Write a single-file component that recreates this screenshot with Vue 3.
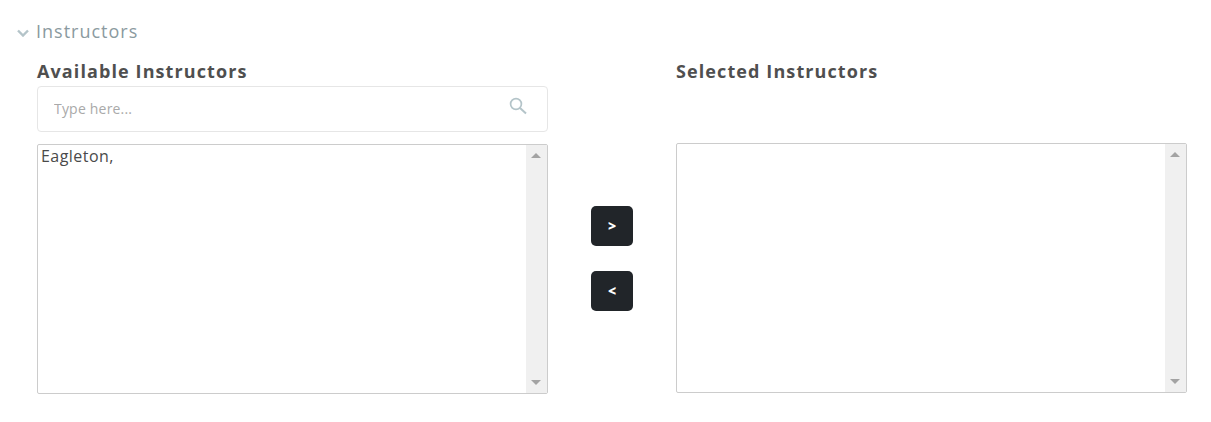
<script setup>
const available = ['Eagleton,']
const selected = []
</script>

<template>
  <div class="page">
    <div class="section-head">
      <svg class="chevron" width="12" height="8" viewBox="0 0 12 8">
        <path d="M1 1.5 L6 6.5 L11 1.5" fill="none" stroke="#b4c4c9" stroke-width="2.4" />
      </svg>
      <span class="section-title">Instructors</span>
    </div>

    <div class="picker">
      <div class="col">
        <h3 class="col-title">Available Instructors</h3>
        <div class="search">
          <input class="search-input" type="text" placeholder="Type here..." />
          <svg class="search-icon" width="18" height="18" viewBox="0 0 18 18">
            <circle cx="7" cy="7" r="5.4" fill="none" stroke="#b4c4c9" stroke-width="1.7" />
            <path d="M11 11 L17 16.6" fill="none" stroke="#b4c4c9" stroke-width="2" />
          </svg>
        </div>
        <div class="listbox">
          <div class="items">
            <div v-for="name in available" :key="name" class="item">{{ name }}</div>
          </div>
          <div class="scrollbar">
            <span class="arrow up"></span>
            <span class="arrow down"></span>
          </div>
        </div>
      </div>

      <div class="actions">
        <button class="move" type="button">&gt;</button>
        <button class="move" type="button">&lt;</button>
      </div>

      <div class="col">
        <h3 class="col-title">Selected Instructors</h3>
        <div class="listbox right">
          <div class="items">
            <div v-for="name in selected" :key="name" class="item">{{ name }}</div>
          </div>
          <div class="scrollbar">
            <span class="arrow up"></span>
            <span class="arrow down"></span>
          </div>
        </div>
      </div>
    </div>
  </div>
</template>

<style>
html, body {
  background: #fff;
}
</style>

<style scoped>
.page {
  height: 422px;
  box-sizing: border-box;
  padding: 19px 24px 0 17px;
  font-family: "Open Sans", "Lato", sans-serif;
  color: #4a4a4a;
}

.section-head {
  display: flex;
  align-items: center;
  height: 24px;
}
.chevron {
  margin: 3px 7px 0 0;
}
.section-title {
  font-size: 18px;
  color: #8b9aa0;
  letter-spacing: 1px;
}

.picker {
  display: grid;
  grid-template-columns: 511px 128px 511px;
  margin-left: 20px;
  margin-top: 14px;
}
.col-title {
  margin: 0;
  height: 29px;
  line-height: 28px;
  font-size: 18px;
  font-weight: 700;
  letter-spacing: 1.1px;
  color: #4f4f4f;
}

.search {
  position: relative;
  height: 46px;
  box-sizing: border-box;
  border: 1px solid #e6e6e6;
  border-radius: 4px;
  display: flex;
  align-items: center;
}
.search-input {
  flex: 1;
  border: none;
  outline: none;
  padding: 0 60px 2px 16px;
  font-family: inherit;
  font-size: 14px;
  letter-spacing: 0.2px;
  color: #4a4a4a;
  background: transparent;
}
.search-input::placeholder {
  color: #a9a9a9;
  opacity: 1;
}
.search-icon {
  position: absolute;
  right: 20px;
  top: 10px;
}

.listbox {
  display: flex;
  height: 250px;
  box-sizing: border-box;
  margin-top: 12px;
  border: 1px solid #cccccc;
  border-radius: 2px;
}
.listbox.right {
  margin-top: 57px;
}
.items {
  flex: 1;
  padding: 1px 3px;
  font-size: 16px;
  line-height: 20px;
  letter-spacing: 0.45px;
  color: #4a4a4a;
}
.scrollbar {
  width: 21px;
  box-sizing: border-box;
  background: #f0f0f0;
  display: flex;
  flex-direction: column;
  justify-content: space-between;
  align-items: center;
  padding: 8px 1px 8px 0;
}
.arrow {
  width: 0;
  height: 0;
  border-left: 5px solid transparent;
  border-right: 5px solid transparent;
}
.arrow.up {
  border-bottom: 5px solid #a3a3a3;
}
.arrow.down {
  border-top: 5px solid #a3a3a3;
}

.actions {
  display: flex;
  flex-direction: column;
  align-items: center;
  gap: 25px;
  padding-top: 149px;
}
.move {
  width: 42px;
  height: 40px;
  border: none;
  border-radius: 5px;
  background: #212529;
  color: #fff;
  font-family: inherit;
  font-size: 14px;
  font-weight: 800;
  padding: 0 0 1px;
  cursor: pointer;
}
</style>
